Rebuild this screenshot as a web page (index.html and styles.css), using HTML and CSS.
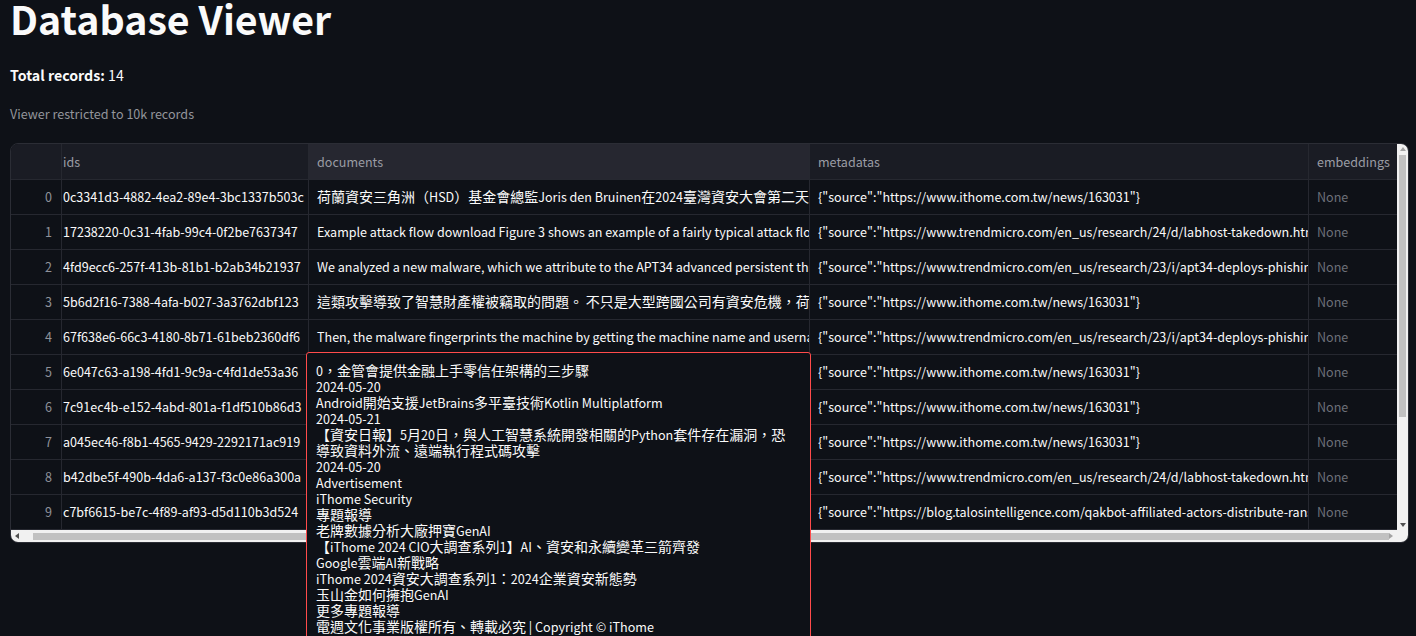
FILE: index.html
```html
<!DOCTYPE html>
<html lang="zh-Hant">
<head>
<meta charset="utf-8">
<title>Database Viewer</title>
<link rel="stylesheet" href="styles.css">
</head>
<body>
<main class="app">
  <h1 class="title">Database Viewer</h1>
  <p class="total"><strong>Total records:</strong> 14</p>
  <p class="caption">Viewer restricted to 10k records</p>

  <div class="grid-area">
    <div class="grid-wrap">
      <div class="grid">
        <div class="row head">
          <div class="cell idx"></div>
          <div class="cell ids">ids</div>
          <div class="cell doc focus">documents</div>
          <div class="cell meta">metadatas</div>
          <div class="cell emb">embeddings</div>
        </div>
        <div class="row">
          <div class="cell idx">0</div>
          <div class="cell ids">0c3341d3-4882-4ea2-89e4-3bc1337b503c</div>
          <div class="cell doc"><span class="zh">荷蘭資安三角洲（</span>HSD<span class="zh">）基金會總監</span>Joris den Bruinen<span class="zh">在</span>2024<span class="zh">臺灣資安大會第二天的主題演講中，分享荷蘭推動資安產業聚落的經驗</span></div>
          <div class="cell meta">{"source":"https://www.ithome.com.tw/news/163031"}</div>
          <div class="cell emb">None</div>
        </div>
        <div class="row">
          <div class="cell idx">1</div>
          <div class="cell ids">17238220-0c31-4fab-99c4-0f2be7637347</div>
          <div class="cell doc">Example attack flow download Figure 3 shows an example of a fairly typical attack flow involving a PhaaS platform</div>
          <div class="cell meta">{"source":"https://www.trendmicro.com/en_us/research/24/d/labhost-takedown.html"}</div>
          <div class="cell emb">None</div>
        </div>
        <div class="row">
          <div class="cell idx">2</div>
          <div class="cell ids">4fd9ecc6-257f-413b-81b1-b2ab34b21937</div>
          <div class="cell doc">We analyzed a new malware, which we attribute to the APT34 advanced persistent threat group, used in a phishing campaign</div>
          <div class="cell meta">{"source":"https://www.trendmicro.com/en_us/research/23/i/apt34-deploys-phishing-with-previously-undetected-malware.html"}</div>
          <div class="cell emb">None</div>
        </div>
        <div class="row">
          <div class="cell idx">3</div>
          <div class="cell ids">5b6d2f16-7388-4afa-b027-3a3762dbf123</div>
          <div class="cell doc"><span class="zh">這類攻擊導致了智慧財產權被竊取的問題。</span> <span class="zh">不只是大型跨國公司有資安危機，荷蘭的中小企業也面臨同樣的威脅</span></div>
          <div class="cell meta">{"source":"https://www.ithome.com.tw/news/163031"}</div>
          <div class="cell emb">None</div>
        </div>
        <div class="row">
          <div class="cell idx">4</div>
          <div class="cell ids">67f638e6-66c3-4180-8b71-61beb2360df6</div>
          <div class="cell doc">Then, the malware fingerprints the machine by getting the machine name and username and sends them to the server</div>
          <div class="cell meta">{"source":"https://www.trendmicro.com/en_us/research/23/i/apt34-deploys-phishing-with-previously-undetected-malware.html"}</div>
          <div class="cell emb">None</div>
        </div>
        <div class="row">
          <div class="cell idx">5</div>
          <div class="cell ids">6e047c63-a198-4fd1-9c9a-c4fd1de53a36</div>
          <div class="cell doc">0<span class="zh">，金管會提供金融上手零信任架構的三步驟</span></div>
          <div class="cell meta">{"source":"https://www.ithome.com.tw/news/163031"}</div>
          <div class="cell emb">None</div>
        </div>
        <div class="row">
          <div class="cell idx">6</div>
          <div class="cell ids">7c91ec4b-e152-4abd-801a-f1df510b86d3</div>
          <div class="cell doc"><span class="zh">臺灣資安大會</span></div>
          <div class="cell meta">{"source":"https://www.ithome.com.tw/news/163031"}</div>
          <div class="cell emb">None</div>
        </div>
        <div class="row">
          <div class="cell idx">7</div>
          <div class="cell ids">a045ec46-f8b1-4565-9429-2292171ac919</div>
          <div class="cell doc"><span class="zh">資安日報</span></div>
          <div class="cell meta">{"source":"https://www.ithome.com.tw/news/163031"}</div>
          <div class="cell emb">None</div>
        </div>
        <div class="row">
          <div class="cell idx">8</div>
          <div class="cell ids">b42dbe5f-490b-4da6-a137-f3c0e86a300a</div>
          <div class="cell doc">LabHost takedown</div>
          <div class="cell meta">{"source":"https://www.trendmicro.com/en_us/research/24/d/labhost-takedown.html"}</div>
          <div class="cell emb">None</div>
        </div>
        <div class="row">
          <div class="cell idx">9</div>
          <div class="cell ids">c7bf6615-be7c-4f89-af93-d5d110b3d524</div>
          <div class="cell doc">Qakbot affiliated actors</div>
          <div class="cell meta">{"source":"https://blog.talosintelligence.com/qakbot-affiliated-actors-distribute-ransom/"}</div>
          <div class="cell emb">None</div>
        </div>
      </div>
      <div class="vscroll">
        <span class="arrow up"></span>
        <span class="vthumb"></span>
        <span class="arrow down"></span>
      </div>
      <div class="hscroll">
        <span class="arrow left"></span>
        <span class="hthumb"></span>
        <span class="arrow right"></span>
      </div>
      <div class="corner"></div>
    </div>

    <div class="editor">0<span class="zh">，金管會提供金融上手零信任架構的三步驟</span>
2024-05-20
Android<span class="zh">開始支援</span>JetBrains<span class="zh">多平臺技術</span>Kotlin Multiplatform
2024-05-21
<span class="zh">【資安日報】</span>5<span class="zh">月</span>20<span class="zh">日，與人工智慧系統開發相關的</span>Python<span class="zh">套件存在漏洞，恐</span>
<span class="zh">導致資料外流、遠端執行程式碼攻擊</span>
2024-05-20
Advertisement
iThome Security
<span class="zh">專題報導</span>
<span class="zh">老牌數據分析大廠押寶</span>GenAI
<span class="zh">【</span>iThome 2024 CIO<span class="zh">大調查系列</span>1<span class="zh">】</span>AI<span class="zh">、資安和永續變革三箭齊發</span>
Google<span class="zh">雲端</span>AI<span class="zh">新戰略</span>
iThome 2024<span class="zh">資安大調查系列</span>1<span class="zh">：</span>2024<span class="zh">企業資安新態勢</span>
<span class="zh">玉山金如何擁抱</span>GenAI
<span class="zh">更多專題報導</span>
<span class="zh">電週文化事業版權所有、轉載必究</span> | Copyright © iThome</div>
  </div>
</main>
</body>
</html>
```

FILE: styles.css
```css
html, body {
  margin: 0;
  padding: 0;
  background: #0e1117;
  height: 100%;
  overflow: hidden;
}

.app {
  padding: 0 8px 0 10px;
  color: #fafafa;
  font-family: "Noto Sans CJK TC", "Noto Sans", sans-serif;
}

/* CJK runs keep the full 14px size while the Latin text is set smaller */
.zh {
  font-size: 14px;
  line-height: 1;
}

.title {
  margin: 0;
  font-size: 39.3px;
  line-height: 35px;
  font-weight: 700;
}

.total {
  margin: 30px 0 0;
  font-size: 14.2px;
  line-height: 20px;
}

.total strong {
  font-weight: 700;
}

.caption {
  margin: 20px 0 0;
  font-size: 12.6px;
  line-height: 18px;
  color: #93959b;
}

.grid-area {
  position: relative;
  margin-top: 20px;
  width: 1399px;
}

.grid-wrap {
  display: grid;
  grid-template-columns: 1386px 11px;
  grid-template-rows: 386px 12px;
  border: 1px solid #2b2d35;
  border-radius: 8px;
  overflow: hidden;
  background: #0e1117;
}

.grid {
  display: flex;
  flex-direction: column;
  overflow: hidden;
}

.row {
  display: grid;
  grid-template-columns: 51px 247px 501px 499px 88px;
  height: 35px;
  flex: none;
}

.row.head {
  height: 36px;
  background: #1a1c24;
}

.cell {
  box-sizing: border-box;
  border-right: 1px solid #262830;
  border-bottom: 1px solid #262830;
  font-size: 12.55px;
  line-height: 33px;
  white-space: nowrap;
  overflow: hidden;
  padding: 0 8px;
}

.head .cell {
  line-height: 35px;
  color: #9a9ca4;
}

.head .cell.focus {
  background: #262730;
}

.cell.idx {
  text-align: right;
  color: #8f929a;
  padding-right: 9px;
}

.cell.ids {
  padding-left: 1px;
}

.cell.emb {
  border-right: none;
  color: #6d7079;
}

.head .cell.emb {
  color: #9a9ca4;
}

/* scrollbars */
.vscroll,
.hscroll,
.corner {
  background: #f1f1f1;
}

.vscroll {
  display: flex;
  flex-direction: column;
  align-items: center;
}

.vthumb {
  flex: none;
  width: 7px;
  height: 262px;
  margin-top: 4px;
  background: #c1c1c1;
}

.vscroll .arrow.down {
  margin-top: auto;
}

.hscroll {
  display: flex;
  align-items: center;
}

.hthumb {
  flex: none;
  height: 7px;
  width: 1356px;
  margin-left: 4px;
  background: #c1c1c1;
}

.hscroll .arrow.right {
  margin-left: auto;
}

.arrow {
  flex: none;
  width: 0;
  height: 0;
  border: 3px solid transparent;
}

.arrow.up {
  margin-top: 3px;
  border-bottom: 4px solid #a3a3a3;
  border-top-width: 0;
}

.arrow.down {
  margin-bottom: 3px;
  border-top: 4px solid #505050;
  border-bottom-width: 0;
}

.arrow.left {
  margin-left: 4px;
  margin-right: 10px;
  border-right: 4px solid #505050;
  border-left-width: 0;
}

.arrow.right {
  margin-right: 4px;
  border-left: 4px solid #a3a3a3;
  border-right-width: 0;
}

/* overlay cell editor */
.editor {
  position: absolute;
  top: 209px;
  left: 296px;
  width: 485px;
  height: 300px;
  padding: 10px 9px 0 9px;
  border: 1px solid #ff4b4b;
  border-radius: 3px;
  background: #0e1117;
  color: #fafafa;
  font-size: 12.6px;
  line-height: 16px;
  white-space: pre;
  overflow: hidden;
}
```
